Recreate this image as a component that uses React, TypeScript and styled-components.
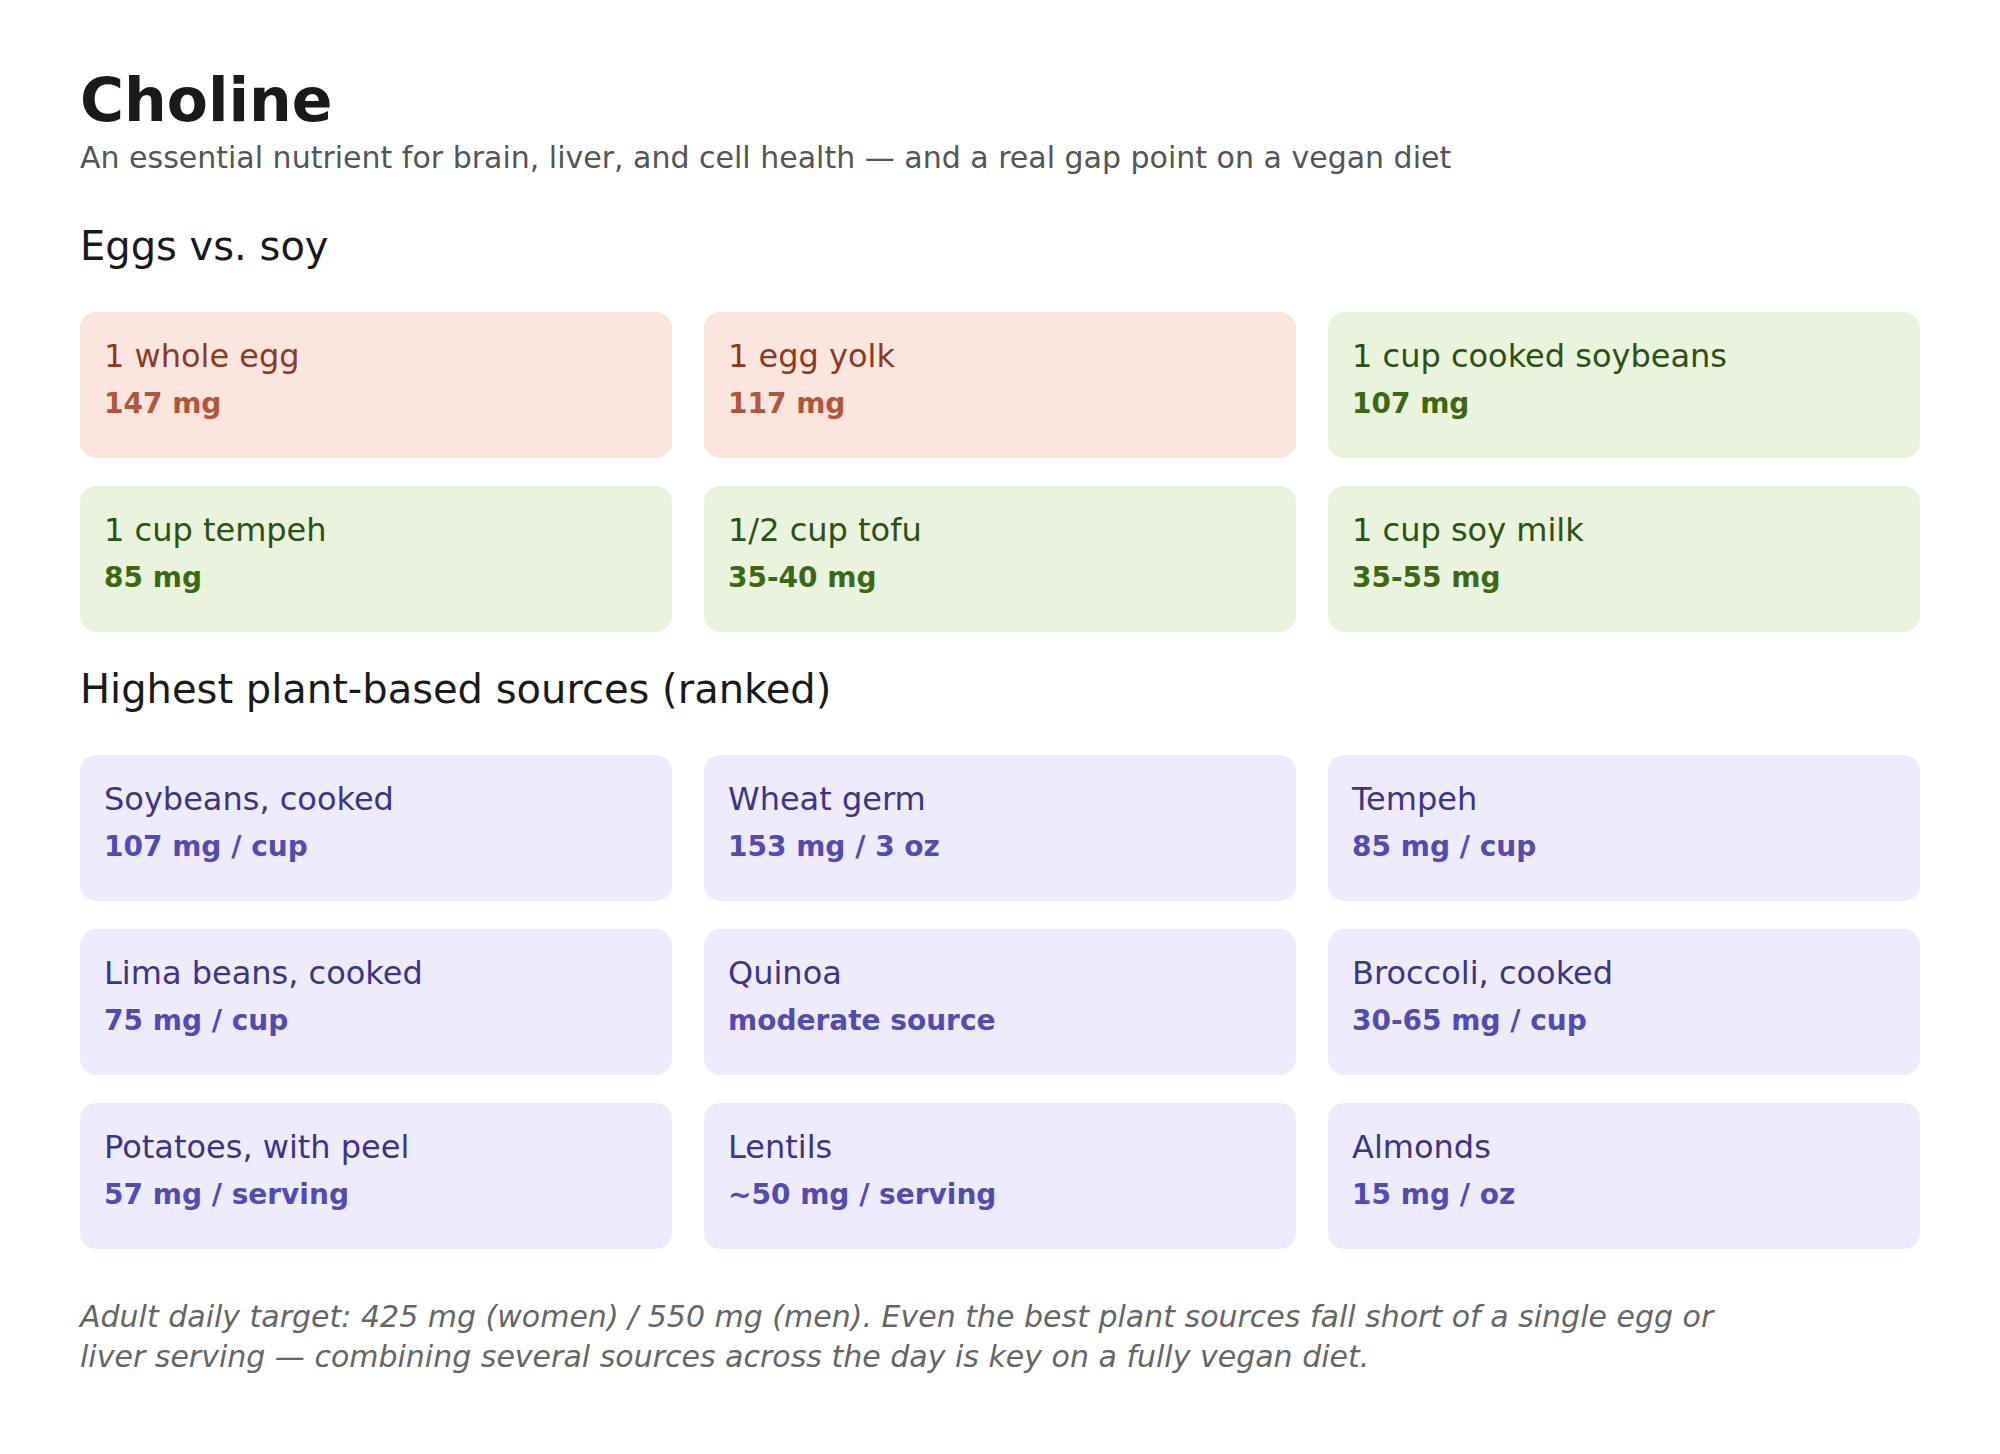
import styled, { createGlobalStyle } from "styled-components";

type Tone = "egg" | "soy" | "plant";

const tones: Record<Tone, { bg: string; label: string; value: string }> = {
    egg: { bg: "#fae6df", label: "#8f3a1d", value: "#b3553a" },
    soy: { bg: "#eaf3de", label: "#2a5210", value: "#3b6912" },
    plant: { bg: "#eeecfc", label: "#3c3489", value: "#534ab7" },
};

const eggsVsSoy: { label: string; value: string; tone: Tone }[] = [
    { label: "1 whole egg", value: "147 mg", tone: "egg" },
    { label: "1 egg yolk", value: "117 mg", tone: "egg" },
    { label: "1 cup cooked soybeans", value: "107 mg", tone: "soy" },
    { label: "1 cup tempeh", value: "85 mg", tone: "soy" },
    { label: "1/2 cup tofu", value: "35-40 mg", tone: "soy" },
    { label: "1 cup soy milk", value: "35-55 mg", tone: "soy" },
];

const plantSources = [
    { label: "Soybeans, cooked", value: "107 mg / cup" },
    { label: "Wheat germ", value: "153 mg / 3 oz" },
    { label: "Tempeh", value: "85 mg / cup" },
    { label: "Lima beans, cooked", value: "75 mg / cup" },
    { label: "Quinoa", value: "moderate source" },
    { label: "Broccoli, cooked", value: "30-65 mg / cup" },
    { label: "Potatoes, with peel", value: "57 mg / serving" },
    { label: "Lentils", value: "~50 mg / serving" },
    { label: "Almonds", value: "15 mg / oz" },
];

export default function App(){
    return(
        <Page>
            <GlobalStyle />
            <Title>Choline</Title>
            <Subtitle>An essential nutrient for brain, liver, and cell health — and a real gap point on a vegan diet</Subtitle>

            <SectionTitle>Eggs vs. soy</SectionTitle>
            <Grid>
                {eggsVsSoy.map((item) => (
                    <Card key={item.label} tone={item.tone}>
                        <Label tone={item.tone}>{item.label}</Label>
                        <Value tone={item.tone}>{item.value}</Value>
                    </Card>
                ))}
            </Grid>

            <SectionTitle>Highest plant-based sources (ranked)</SectionTitle>
            <Grid>
                {plantSources.map((item) => (
                    <Card key={item.label} tone="plant">
                        <Label tone="plant">{item.label}</Label>
                        <Value tone="plant">{item.value}</Value>
                    </Card>
                ))}
            </Grid>

            <Note>
                Adult daily target: 425 mg (women) / 550 mg (men). Even the best plant sources fall short of a single egg or liver serving — combining several sources across the day is key on a fully vegan diet.
            </Note>
        </Page>
    );
}

const GlobalStyle = createGlobalStyle`
    html, body {
        margin: 0;
        padding: 0;
        background: #ffffff;
    }
    body {
        font-family: "DejaVu Sans", Verdana, sans-serif;
    }
`;

const Page = styled.div`
    display: flex;
    flex-direction: column;
    padding: 64px 80px 80px;
    font-family: "DejaVu Sans", Verdana, sans-serif;
    color: #1a1a1a;
`;

const Title = styled.h1`
    margin: 0;
    font-size: 60px;
    line-height: 72px;
    font-weight: 700;
    color: #1a1a1a;
`;

const Subtitle = styled.p`
    margin: 2px 0 11px;
    font-size: 30px;
    line-height: 40px;
    color: #555555;
`;

const SectionTitle = styled.h2`
    margin: 33px 0 42px;
    font-size: 40px;
    line-height: 48px;
    font-weight: 400;
    color: #1a1a1a;
`;

const Grid = styled.div`
    display: grid;
    grid-template-columns: repeat(3, 1fr);
    gap: 28px 32px;
`;

const Card = styled.div<{ tone: Tone }>`
    display: flex;
    flex-direction: column;
    padding: 24px 24px 36px;
    min-height: 146px;
    box-sizing: border-box;
    border-radius: 16px;
    background: ${(p) => tones[p.tone].bg};
`;

const Label = styled.div<{ tone: Tone }>`
    font-size: 32px;
    line-height: 40px;
    color: ${(p) => tones[p.tone].label};
`;

const Value = styled.div<{ tone: Tone }>`
    margin-top: 10px;
    font-size: 28px;
    line-height: 36px;
    font-weight: 700;
    color: ${(p) => tones[p.tone].value};
`;

const Note = styled.p`
    margin: 48px 0 0;
    max-width: 1680px;
    font-size: 30px;
    line-height: 40px;
    font-style: italic;
    color: #666666;
`;
